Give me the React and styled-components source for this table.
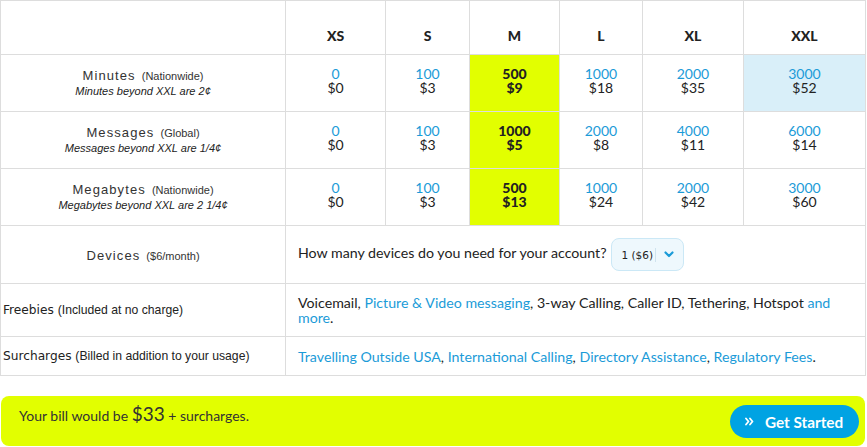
import React from "react";
import styled, { createGlobalStyle } from "styled-components";

const Global = createGlobalStyle`
  html, body { margin: 0; padding: 0; background: #fff; }
  body { font-family: "Liberation Sans", Arial, sans-serif; color: #333; }
`;

const Page = styled.div`
  width: 867px;
`;

const Table = styled.table`
  border-collapse: collapse;
  table-layout: fixed;
  width: 866px;
`;

const Cell = styled.td`
  border: 1px solid #ddd;
  padding: 0 0 4px;
  text-align: center;
  vertical-align: middle;
  background: ${(p) => (p.$hl === "lime" ? "#e2ff00" : p.$hl === "blue" ? "#d9eff9" : "transparent")};
`;

const Head = styled.th`
  border: 1px solid #ddd;
  height: 43px;
  padding: 0 0 10px;
  vertical-align: bottom;
  text-align: center;
  font-family: Lato, sans-serif;
  font-weight: 900;
  font-size: 14px;
  line-height: 16px;
  color: #222;
`;

const LabelCell = styled.td`
  border: 1px solid #ddd;
  height: ${(p) => p.$h || 52}px;
  text-align: center;
  vertical-align: middle;
  padding: 0 0 ${(p) => (p.$h ? 0 : 4)}px;
`;

const Label = styled.span`
  font-family: "Liberation Sans", Arial, sans-serif;
  font-size: 13px;
  letter-spacing: 1.1px;
  color: #333;
`;

const Small = styled.span`
  font-family: "Liberation Sans", Arial, sans-serif;
  font-size: 11px;
  color: #333;
  margin-left: 6px;
`;

const Note = styled.div`
  font-family: "Liberation Sans", Arial, sans-serif;
  font-style: italic;
  font-size: 11px;
  color: #222;
  margin-top: 1px;
`;

const Qty = styled.div`
  font-family: Lato, sans-serif;
  font-size: 14px;
  line-height: 14px;
  color: ${(p) => (p.$bold ? "#222" : "#1b9bd8")};
  font-weight: ${(p) => (p.$bold ? 900 : 400)};
`;

const Price = styled.div`
  font-family: Lato, sans-serif;
  font-size: 14px;
  line-height: 14px;
  color: #222;
  font-weight: ${(p) => (p.$bold ? 900 : 400)};
`;

const TextCell = styled.td`
  border: 1px solid #ddd;
  padding: 0 12px;
  text-align: left;
  vertical-align: middle;
  height: ${(p) => p.$h}px;
  font-family: Lato, sans-serif;
  font-size: 14.2px;
  line-height: 15px;
  color: #222;
`;

const SideLabel = styled.td`
  border: 1px solid #ddd;
  padding: 0 2px;
  text-align: left;
  vertical-align: middle;
  font-family: "DejaVu Sans", sans-serif;
  font-size: 12.2px;
  color: #222;
`;

const SideNote = styled.span`
  font-family: "Liberation Sans", Arial, sans-serif;
  font-size: 12.2px;
`;

const Link = styled.a`
  color: #1b9bd8;
  text-decoration: none;
`;

const SelectBox = styled.span`
  display: inline-flex;
  align-items: center;
  vertical-align: middle;
  margin-left: 4px;
  height: 31px;
  width: 71px;
  box-sizing: content-box;
  border: 1px solid #cbe8f6;
  border-radius: 8px;
  background: #eef8fd;
  font-family: "DejaVu Sans", sans-serif;
  font-size: 10.5px;
  color: #222;
`;

const SelectValue = styled.span`
  padding-left: 10px;
  width: 33px;
  border-right: 1px solid #cfe3ee;
  line-height: 14px;
`;

const Chevron = styled.span`
  flex: 1;
  display: flex;
  justify-content: center;
`;

const Bar = styled.div`
  margin: 20px 2px 0 1px;
  height: 50px;
  background: #e2ff00;
  border-radius: 8px;
  display: flex;
  justify-content: space-between;
  align-items: center;
  padding: 0 6px 0 18px;
`;

const BillText = styled.div`
  font-family: Lato, sans-serif;
  font-size: 14px;
  color: #333;
  align-self: flex-start;
  padding-top: 6px;
`;

const Amount = styled.span`
  font-size: 19px;
`;

const Button = styled.button`
  display: flex;
  align-items: center;
  gap: 11px;
  height: 33px;
  width: 129px;
  border: none;
  border-radius: 17px;
  background: #00a3e3;
  color: #fff;
  font-family: Lato, sans-serif;
  font-weight: 700;
  font-size: 15.3px;
  padding: 0 0 0 15px;
  margin-top: 1px;
`;

const cols = [
  ["XS", 100],
  ["S", 84],
  ["M", 90],
  ["L", 83],
  ["XL", 101],
  ["XXL", 122],
];

const rows = [
  {
    label: "Minutes",
    small: "(Nationwide)",
    note: "Minutes beyond XXL are 2¢",
    vals: [["0", "$0"], ["100", "$3"], ["500", "$9"], ["1000", "$18"], ["2000", "$35"], ["3000", "$52"]],
    blue: 5,
  },
  {
    label: "Messages",
    small: "(Global)",
    note: "Messages beyond XXL are 1/4¢",
    vals: [["0", "$0"], ["100", "$3"], ["1000", "$5"], ["2000", "$8"], ["4000", "$11"], ["6000", "$14"]],
  },
  {
    label: "Megabytes",
    small: "(Nationwide)",
    note: "Megabytes beyond XXL are 2 1/4¢",
    vals: [["0", "$0"], ["100", "$3"], ["500", "$13"], ["1000", "$24"], ["2000", "$42"], ["3000", "$60"]],
  },
];

export default function App() {
  return (
    <Page>
      <Global />
      <Table>
        <colgroup>
          <col style={{ width: 285 }} />
          {cols.map(([c, w]) => (
            <col key={c} style={{ width: w }} />
          ))}
        </colgroup>
        <thead>
          <tr>
            <Head />
            {cols.map(([c]) => (
              <Head key={c}>{c}</Head>
            ))}
          </tr>
        </thead>
        <tbody>
          {rows.map((r) => (
            <tr key={r.label}>
              <LabelCell>
                <div>
                  <Label>{r.label}</Label>
                  <Small>{r.small}</Small>
                </div>
                <Note>{r.note}</Note>
              </LabelCell>
              {r.vals.map(([q, p], i) => {
                const m = i === 2;
                return (
                  <Cell key={i} $hl={m ? "lime" : r.blue === i ? "blue" : ""}>
                    <Qty $bold={m}>{q}</Qty>
                    <Price $bold={m}>{p}</Price>
                  </Cell>
                );
              })}
            </tr>
          ))}
          <tr>
            <LabelCell $h={57}>
              <Label>Devices</Label>
              <Small>($6/month)</Small>
            </LabelCell>
            <TextCell colSpan={6} $h={57}>
              How many devices do you need for your account?
              <SelectBox>
                <SelectValue>1 ($6)</SelectValue>
                <Chevron>
                  <svg width="10" height="7" viewBox="0 0 10 7">
                    <path d="M1.5 1.5 L5 5 L8.5 1.5" fill="none" stroke="#1b9bd8" strokeWidth="2.2" strokeLinecap="round" strokeLinejoin="round" />
                  </svg>
                </Chevron>
              </SelectBox>
            </TextCell>
          </tr>
          <tr>
            <SideLabel>
              Freebies <SideNote>(Included at no charge)</SideNote>
            </SideLabel>
            <TextCell colSpan={6} $h={52}>
              Voicemail, <Link>Picture &amp; Video messaging</Link>, 3-way Calling, Caller ID, Tethering, Hotspot{" "}
              <Link>and more</Link>.
            </TextCell>
          </tr>
          <tr>
            <SideLabel>
              Surcharges <SideNote>(Billed in addition to your usage)</SideNote>
            </SideLabel>
            <TextCell colSpan={6} $h={38}>
              <Link>Travelling Outside USA</Link>, <Link>International Calling</Link>,{" "}
              <Link>Directory Assistance</Link>, <Link>Regulatory Fees</Link>.
            </TextCell>
          </tr>
        </tbody>
      </Table>
      <Bar>
        <BillText>
          Your bill would be <Amount>$33</Amount> + surcharges.
        </BillText>
        <Button>
          <svg width="9" height="9" viewBox="0 0 9 9">
            <path d="M1 1.5 L3.5 4.5 L1 7.5 M5 1.5 L7.5 4.5 L5 7.5" fill="none" stroke="#fff" strokeWidth="1.8" strokeLinecap="round" strokeLinejoin="round" />
          </svg>
          Get Started
        </Button>
      </Bar>
    </Page>
  );
}
